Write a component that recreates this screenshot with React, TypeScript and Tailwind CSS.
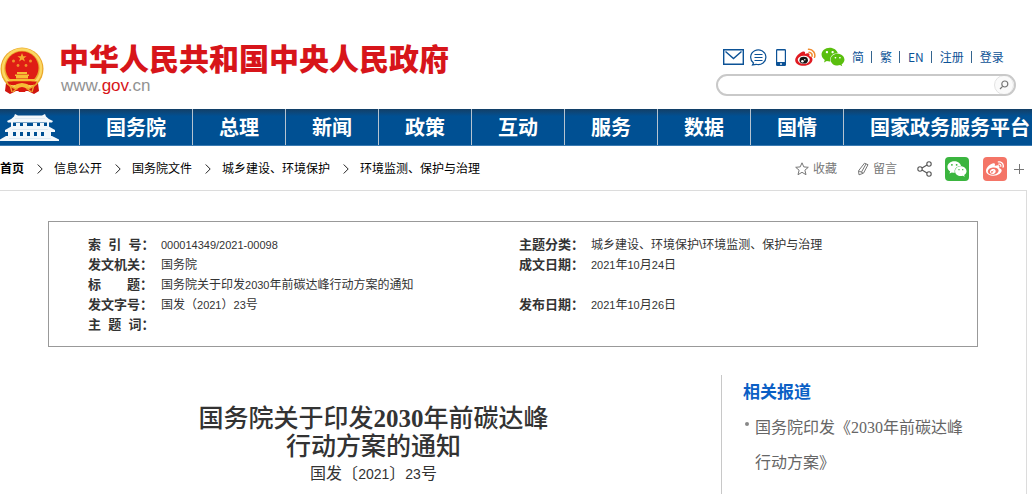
import { Fragment, type ReactNode } from "react";
import { FaWeibo, FaWeixin } from "react-icons/fa";

const NAV_ITEMS = ["国务院", "总理", "新闻", "政策", "互动", "服务", "数据", "国情"];

const CRUMBS = ["信息公开", "国务院文件", "城乡建设、环境保护", "环境监测、保护与治理"];

const TOP_LINKS = ["简", "繁", "EN", "注册", "登录"];

type InfoRow = {
  label: string;
  value: ReactNode;
  label2?: string;
  value2?: ReactNode;
};

// Latin digits are set slightly smaller than the Chinese text around them
function Num({ children }: { children: ReactNode }) {
  return <span className="text-[11px]">{children}</span>;
}

const INFO_ROWS: InfoRow[] = [
  {
    label: "索\u00a0\u00a0引\u00a0\u00a0号：",
    value: <Num>000014349/2021-00098</Num>,
    label2: "主题分类：",
    value2: "城乡建设、环境保护\\环境监测、保护与治理",
  },
  {
    label: "发文机关：",
    value: "国务院",
    label2: "成文日期：",
    value2: <><Num>2021</Num>年<Num>10</Num>月<Num>24</Num>日</>,
  },
  {
    label: "标\u3000\u3000题：",
    value: <>国务院关于印发<Num>2030</Num>年前碳达峰行动方案的通知</>,
  },
  {
    label: "发文字号：",
    value: <>国发（<Num>2021</Num>）<Num>23</Num>号</>,
    label2: "发布日期：",
    value2: <><Num>2021</Num>年<Num>10</Num>月<Num>26</Num>日</>,
  },
  { label: "主\u00a0\u00a0题\u00a0\u00a0词：", value: "" },
];

function Emblem() {
  return (
    <svg viewBox="0 0 44 48" className="h-12 w-11 shrink-0" aria-hidden="true">
      <path d="M6 36l-1 8 5 3 6-3h12l6 3 5-3-1-8z" fill="#d0150f" />
      <circle cx="22" cy="22" r="21.500" fill="#eba92c" />
      <circle cx="22" cy="21.500" r="19" fill="none" stroke="#fbd763" strokeWidth="2.500" />
      <circle cx="22" cy="21" r="16.500" fill="#df1d15" />
      <path d="M22 6l1.200 3.200h3.400l-2.700 2.100 1 3.300-2.900-2-2.900 2 1-3.300-2.700-2.100h3.400z" fill="#f5a92f" />
      <g fill="#f0912b">
        <circle cx="13.500" cy="14" r="1.500" />
        <circle cx="30.500" cy="14" r="1.500" />
        <circle cx="18" cy="18.500" r="1.400" />
        <circle cx="26" cy="18.500" r="1.400" />
      </g>
      <path d="M17 25h10v2H17zM15 27.500h14v1.500H15zM16 29h12v2.500H16zM9 32h26v2.500H9z" fill="#f6bd35" />
      <path d="M7 34.500h30l-2 3q-6 2-9-1h-8q-3 3-9 1z" fill="#d9170f" />
      <path d="M14 39q8-6 16 0l-3 3q-5-4-10 0z" fill="#f6bd35" />
      <path d="M17 42q5-4 10 0l-2 3h-6z" fill="#d9170f" />
      <path d="M10 38l2 7M34 38l-2 7M17 41l-4 4M27 41l4 4" stroke="#f0a52c" strokeWidth="1.300" />
    </svg>
  );
}

function GateIcon() {
  return (
    <svg viewBox="0 0 60 27" className="h-[27px] w-[60px]" aria-hidden="true">
      <g fill="#f3f8fb">
        <path d="M15 0l3 1.500h24L45 0l1 2.500q3 3.500 7 4.500l-1 1.500H8L7 7q4-1 7-4.500z" />
        <path d="M12 12h36l7 4v2H5v-2z" />
        <path d="M6 22h46l7 3.500V27H0v-1.500z" />
        <path d="M11 8h2v5h-2zM16 9h4v3h-4zM23 9h4v3h-4zM33 9h4v3h-4zM40 9h4v3h-4zM47 8h2v5h-2z" />
        <path d="M8 18h5v5H8zM16 18h4v5h-4zM23 18h4v5h-4zM30 18h4v5h-4zM37 18h4v5h-4zM44 18h7v5h-7z" />
      </g>
      <path d="M15 4.500h30M12 15.500h36M9 24.500h42" stroke="#c9dcea" strokeWidth="0.500" />
    </svg>
  );
}

function MailIcon() {
  return (
    <svg viewBox="0 0 21 16" className="h-4 w-[21px]" fill="none" stroke="#0c5296" strokeWidth="1.400" aria-hidden="true">
      <path d="M.7.700h19.600v14.600H.7z" />
      <path d="M2.500 2.500l8 7 8-7" />
    </svg>
  );
}

function ChatIcon() {
  return (
    <svg viewBox="0 0 17 17" className="size-[17px]" fill="none" stroke="#0c5296" strokeWidth="1.200" aria-hidden="true">
      <path d="M3.500 14A7.600 7.400 0 1 1 6 15.300L2.500 16z" />
      <path d="M4.500 5.500h8M4.500 8.500h8M4.500 11.500h8" />
    </svg>
  );
}

function PhoneIcon() {
  return (
    <svg viewBox="0 0 10 17" className="h-[17px] w-2.5" aria-hidden="true">
      <rect width="10" height="17" rx="1.300" fill="#0c5296" />
      <path d="M1.200 1.500h7.600V13H1.200z" fill="#fff" />
      <circle cx="5" cy="15" r=".9" fill="#fff" />
    </svg>
  );
}

function WeiboColor() {
  return (
    <svg viewBox="0 0 21 18" className="h-[18px] w-[21px]" aria-hidden="true">
      <path d="M8 3.500c1.500-.4 2.500.4 2 2.400 2-.8 4.300-.8 4.500.6.1.8-.3 1.200-.2 1.600 1.400.4 3.200 1.300 3.200 3.400 0 3.400-4 6.300-8.900 6.300C4 17.800.2 15.400.2 12.200.2 8.500 5 4.300 8 3.500z" fill="#e01b22" />
      <ellipse cx="8.800" cy="11.800" rx="6" ry="4" fill="#fff" />
      <ellipse cx="8.700" cy="12.200" rx="4.200" ry="3.400" fill="#151515" />
      <circle cx="7.400" cy="13.200" r="1.300" fill="#fff" />
      <circle cx="9.800" cy="11.700" r=".7" fill="#fff" />
      <path d="M13.500 1.300a6 6 0 0 1 6 8M14 4.200a3.200 3.200 0 0 1 3 4" fill="none" stroke="#f08a2c" strokeWidth="1.500" strokeLinecap="round" />
    </svg>
  );
}

function StarIcon() {
  return (
    <svg viewBox="0 0 14 14" className="size-3.5" fill="none" stroke="#777" strokeLinejoin="round" aria-hidden="true">
      <path d="M7 .8l1.800 4.100 4.500.4-3.400 2.900 1.100 4.500L7 10.300l-4 2.400 1.100-4.500L.7 5.300l4.500-.4z" />
    </svg>
  );
}

function PenIcon() {
  return (
    <svg viewBox="0 0 12 14" className="h-3.5 w-3" fill="none" stroke="#777" strokeLinejoin="round" aria-hidden="true">
      <path d="M7.500 1.200l3.500 1.500-4.500 8.500-4.500 1.600-.5-4zM2 9l4 2" />
      <path d="M9 2l-4.500 8" />
    </svg>
  );
}

function ShareIcon() {
  return (
    <svg viewBox="0 0 15 16" className="h-4 w-[15px]" fill="none" stroke="#555" strokeWidth="1.100" aria-hidden="true">
      <circle cx="3" cy="8" r="2.200" />
      <circle cx="12" cy="3" r="2.200" />
      <circle cx="12" cy="13" r="2.200" />
      <path d="M5 7l5-3M5 9l5 3" />
    </svg>
  );
}

function Crumb({ text }: { text: string }) {
  return (
    <>
      <svg viewBox="0 0 6 10" className="ml-[13px] mr-[11px] h-2.5 w-1.5 shrink-0" fill="none" stroke="#222" aria-hidden="true">
        <path d="M.7.500L5.200 5 .7 9.500" />
      </svg>
      <a href="#" className="whitespace-nowrap">{text}</a>
    </>
  );
}

function Header() {
  return (
    <header className="flex h-[109px] items-start justify-between pr-4 pt-11">
      <div className="flex">
        <a href="#" aria-label="首页" className="mt-[3px]"><Emblem /></a>
        <div className="ml-[15px]">
          <h1 className="whitespace-nowrap text-[30px] font-black leading-8 text-[#d7151a]">
            中华人民共和国中央人民政府
          </h1>
          <p className="pl-0.5 text-[17px] leading-5 text-[#929292]">
            www.<span className="text-[#d7151a]">gov</span>.cn
          </p>
        </div>
      </div>
      <div className="w-[300px]">
        <div className="flex h-[26px] items-center pl-[7px]">
          <a href="#" aria-label="邮箱"><MailIcon /></a>
          <a href="#" aria-label="消息" className="ml-1.5"><ChatIcon /></a>
          <a href="#" aria-label="客户端" className="ml-[9px]"><PhoneIcon /></a>
          <a href="#" aria-label="微博" className="ml-[9px]"><WeiboColor /></a>
          <a href="#" aria-label="微信" className="ml-[5px]"><FaWeixin className="size-6 text-[#5abf0e]" /></a>
          <div className="ml-[7px] flex items-center text-xs text-[#0c5296]">
            {TOP_LINKS.map((link, i) => (
              <Fragment key={link}>
                {i > 0 && <span className="ml-[7px] mr-2 h-3 w-px bg-[#34648f]" />}
                <a href="#" className="font-['Noto_Sans_CJK_SC',sans-serif]">{link}</a>
              </Fragment>
            ))}
          </div>
        </div>
        <form className="mt-1 flex h-[22px] items-center overflow-hidden rounded-full border-2 border-[#c9c9c9] bg-white">
          <input type="text" aria-label="搜索" className="min-w-0 flex-1 px-3 text-xs outline-none" />
          <button type="button" aria-label="搜索" className="flex size-5 items-center justify-center rounded-full border border-[#e2e2e2] bg-[#fafafa]">
            <svg viewBox="0 0 10 10" className="size-2.5" fill="none" stroke="#777" strokeWidth="1.200" aria-hidden="true">
              <circle cx="5.800" cy="4" r="3" />
              <path d="M3.600 6.300L1 9" />
            </svg>
          </button>
        </form>
      </div>
    </header>
  );
}

function Nav() {
  return (
    <nav className="flex h-[37px] overflow-hidden border-b border-[#3b7bb2] bg-[#005093] bg-linear-to-b from-[#123f66] to-[#005093] to-20% font-['Noto_Sans_CJK_SC',sans-serif] text-xl font-bold text-white">
      <a href="#" aria-label="首页" className="flex w-[79px] shrink-0 items-center"><GateIcon /></a>
      {NAV_ITEMS.map((item) => (
        <a key={item} href="#" className="flex shrink-0 items-center border-l border-[#b5c3d0] px-[26px]">
          {item}
        </a>
      ))}
      <a href="#" className="flex flex-1 items-center whitespace-nowrap border-l border-[#b5c3d0] pl-[26px]">
        国家政务服务平台
      </a>
    </nav>
  );
}

export default function App() {
  return (
    <div className="flex min-h-screen flex-col overflow-hidden bg-white font-['Liberation_Sans','Noto_Sans_CJK_SC',sans-serif] text-[#333]">
      <Header />
      <Nav />

      <div className="flex h-11 items-center justify-between pr-2 pt-0.5">
        <div className="flex items-center text-xs text-black">
          <a href="#" className="font-bold">首页</a>
          {CRUMBS.map((text) => (
            <Crumb key={text} text={text} />
          ))}
        </div>
        <div className="flex items-center text-xs text-[#777]">
          <button type="button" className="flex items-center gap-1"><StarIcon />收藏</button>
          <button type="button" className="ml-5 flex items-center gap-1"><PenIcon />留言</button>
          <button type="button" aria-label="分享" className="ml-5"><ShareIcon /></button>
          <button type="button" aria-label="分享到微信" className="ml-[13px] flex size-6 items-center justify-center rounded-sm bg-[#3bb53f] text-white">
            <FaWeixin className="size-5" />
          </button>
          <button type="button" aria-label="分享到微博" className="ml-3.5 flex size-6 items-center justify-center rounded-sm bg-[#f47567] text-white">
            <FaWeibo className="size-[18px]" />
          </button>
          <button type="button" aria-label="更多" className="ml-[7px]">
            <svg viewBox="0 0 10 10" className="size-2.5" stroke="#777" aria-hidden="true">
              <path d="M5.500 0v10M0 5.500h10" />
            </svg>
          </button>
        </div>
      </div>

      <main className="mr-[5px] flex flex-1 flex-col border-r border-t border-[#dcdcdc] pl-12 pr-12 pt-[30px]">
        <div className="border border-[#999] pb-[11px] pl-[39px] pr-6 pt-[13px]">
          <table className="w-full table-fixed text-left text-xs">
            <colgroup>
              <col className="w-[73px]" />
              <col className="w-[358px]" />
              <col className="w-[72px]" />
              <col />
            </colgroup>
            <tbody>
              {INFO_ROWS.map((row) => (
                <tr key={row.label} className="h-5 whitespace-nowrap leading-5">
                  <th scope="row" className="text-[13px] font-bold leading-5">{row.label}</th>
                  <td>{row.value}</td>
                  {row.label2 && (
                    <>
                      <th scope="row" className="text-[13px] font-bold leading-5">{row.label2}</th>
                      <td>{row.value2}</td>
                    </>
                  )}
                </tr>
              ))}
            </tbody>
          </table>
        </div>

        <div className="mt-7 flex flex-1">
          <article className="flex-1 pr-[22px] pt-[30px] text-center">
            <h2 className="font-['Liberation_Serif','Noto_Sans_CJK_SC',serif] text-[25px] font-medium leading-7 text-[#333]">
              国务院关于印发<span className="font-bold">2030</span>年前碳达峰
              <br />
              行动方案的通知
            </h2>
            <p className="text-base leading-[26px]">
              国发〔<span className="text-sm">2021</span>〕<span className="text-sm">23</span>号
            </p>
          </article>
          <aside className="w-[257px] border-l border-[#c8c8c8] pl-[21px] pr-2">
            <h3 className="pt-[5px] text-[17px] font-bold leading-[26px] text-[#0b5fc5]">相关报道</h3>
            <ul className="mt-1">
              <li className="flex">
                <span className="mr-1.5 mt-3 size-1 ml-0.5 shrink-0 rounded-full bg-[#888]" />
                <a href="#" className="font-['Liberation_Serif','Noto_Sans_CJK_SC',serif] text-base leading-[35px] text-[#666]">
                  国务院印发《2030年前碳达峰行动方案》
                </a>
              </li>
            </ul>
          </aside>
        </div>
      </main>
    </div>
  );
}
